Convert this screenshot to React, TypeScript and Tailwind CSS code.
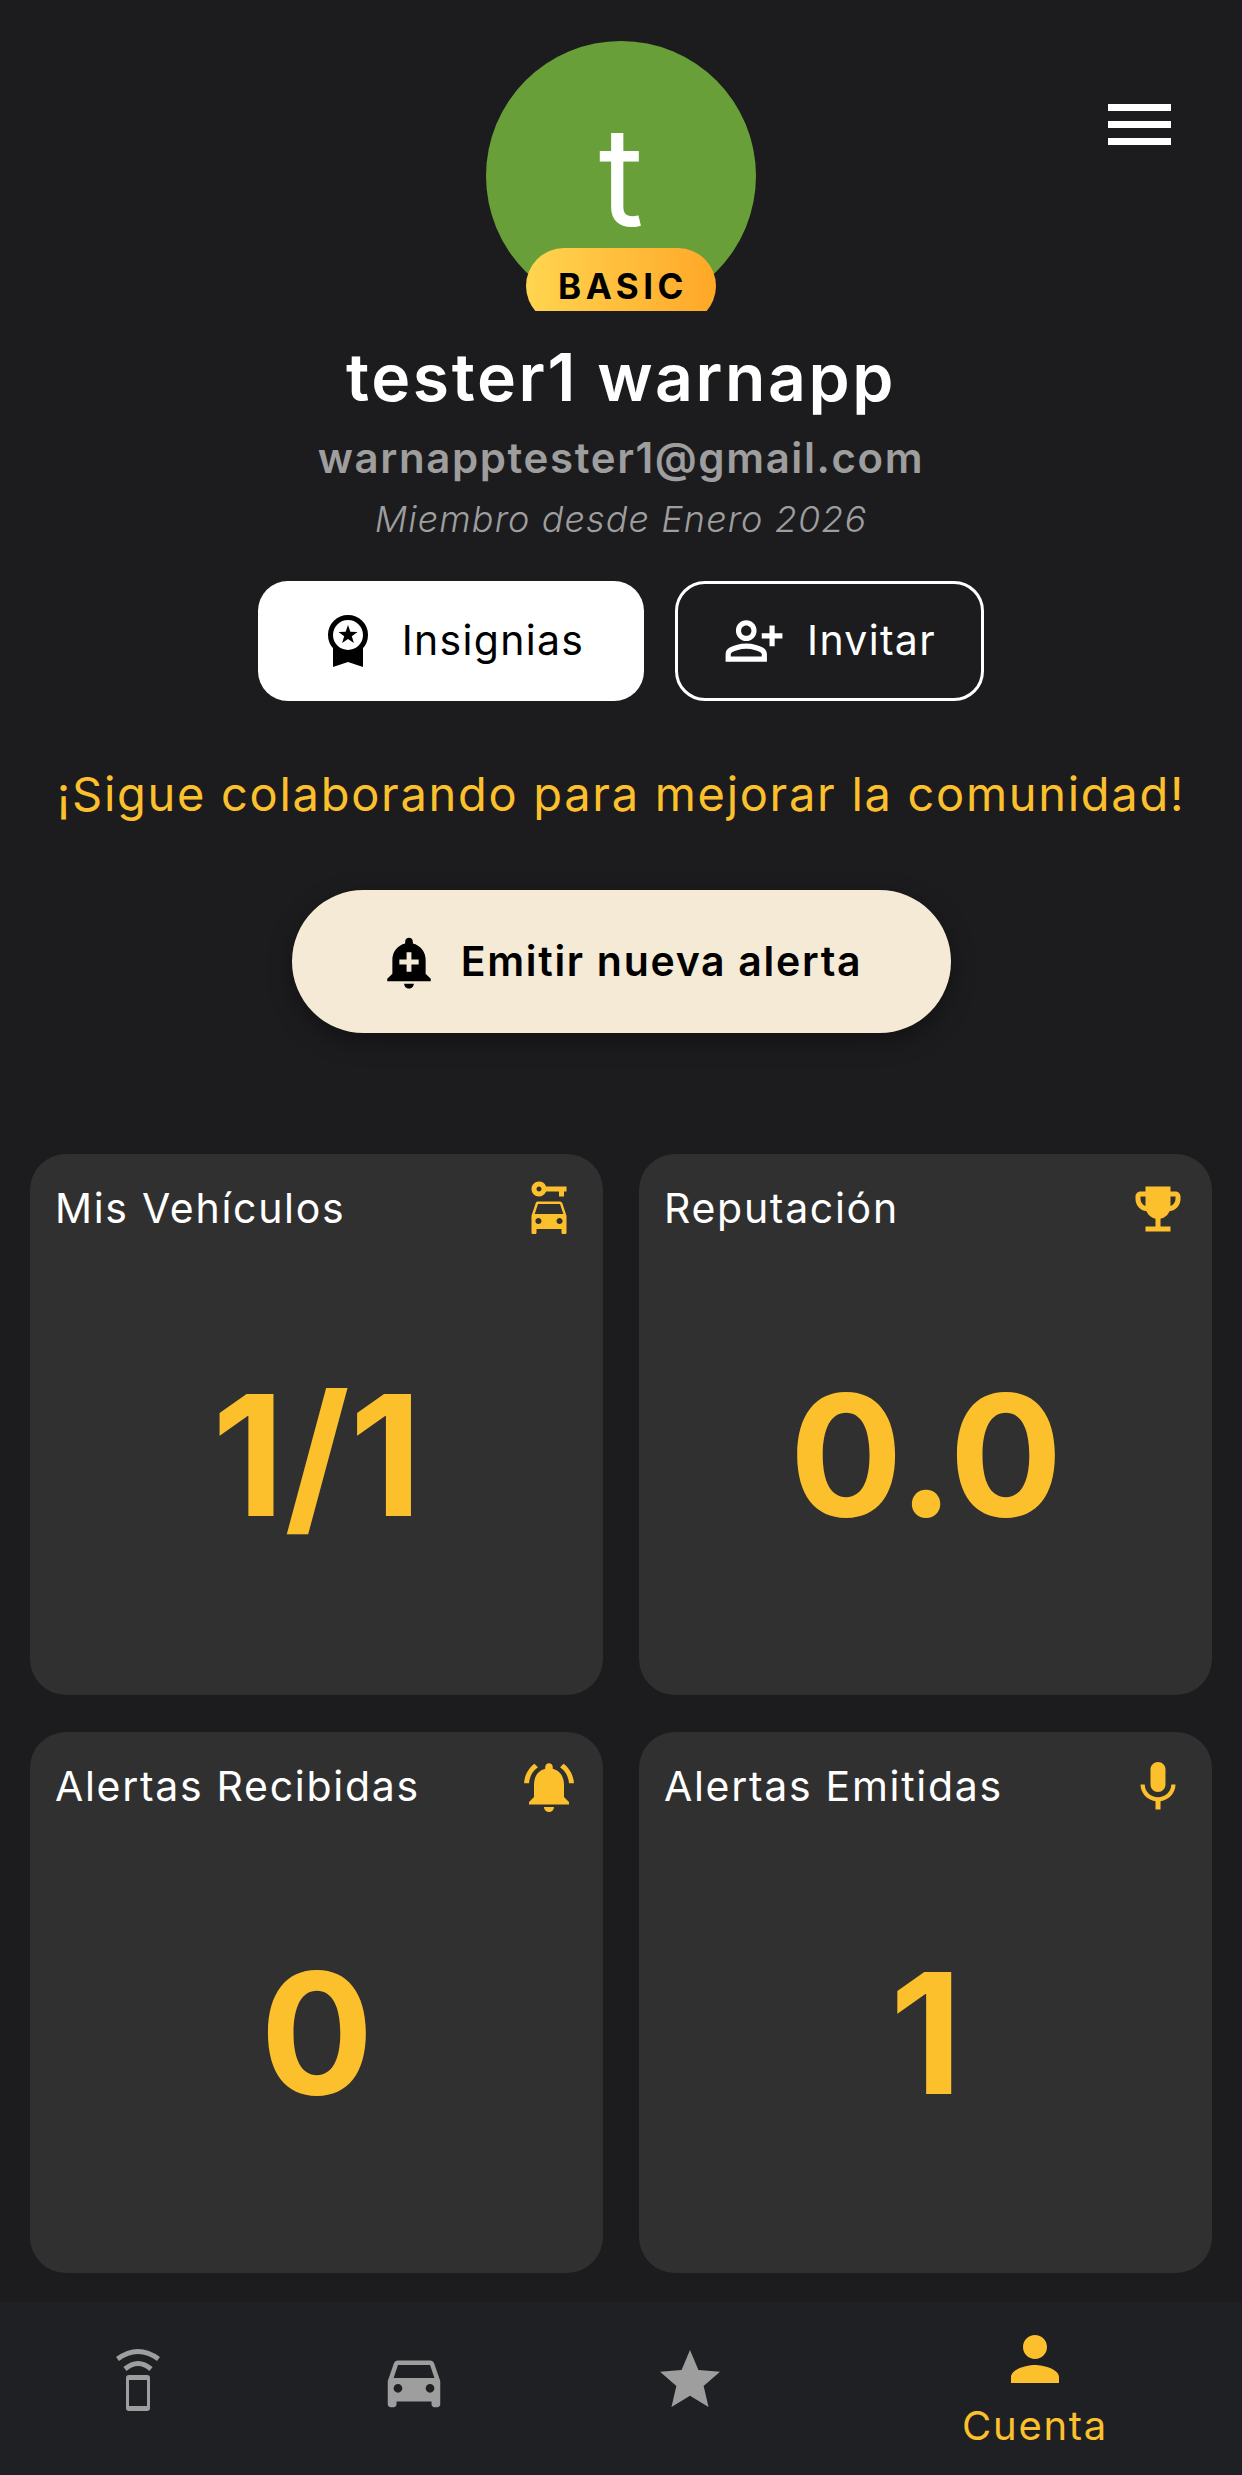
import {
  MdAddAlert,
  MdCarRental,
  MdDirectionsCar,
  MdEmojiEvents,
  MdMic,
  MdNotificationsActive,
  MdOutlinePersonAddAlt,
  MdPerson,
  MdStar,
} from "react-icons/md";

const stats = [
  { title: "Mis Vehículos", value: "1/1", Icon: MdCarRental },
  { title: "Reputación", value: "0.0", Icon: MdEmojiEvents },
  { title: "Alertas Recibidas", value: "0", Icon: MdNotificationsActive },
  { title: "Alertas Emitidas", value: "1", Icon: MdMic },
];

function PhoneSignal() {
  return (
    <svg viewBox="0 0 46 63" className="w-[46px] h-[63px]" fill="none">
      <path d="M2.5 11 Q23 -4 43.5 11" stroke="#9e9e9e" strokeWidth="5" />
      <path d="M10 21 Q23 10 36 21" stroke="#9e9e9e" strokeWidth="5" />
      <path
        fillRule="evenodd"
        fill="#9e9e9e"
        d="M14 27h18a3 3 0 0 1 3 3v30a3 3 0 0 1-3 3H14a3 3 0 0 1-3-3V30a3 3 0 0 1 3-3zM14 32v26h18V32z"
      />
    </svg>
  );
}

function MedalIcon() {
  return (
    <svg viewBox="0 0 40 52" className="w-[40px] h-[52px]">
      <path d="M5 28V52L20 47L35 52V28z" fill="#000" />
      <circle cx="20" cy="20" r="17.5" fill="#fff" stroke="#000" strokeWidth="5" />
      <path
        d="M20 10L22.35 16.76L29.51 16.91L23.8 21.24L25.88 28.09L20 24L14.12 28.09L16.2 21.24L10.49 16.91L17.65 16.76z"
        fill="#000"
      />
    </svg>
  );
}

export default function App() {
  return (
    <div className="w-[1242px] h-[2475px] bg-[#1c1c1e] flex flex-col font-['Inter',sans-serif] overflow-hidden">
      <div className="relative flex-1 flex flex-col items-center pt-[41px]">
        <div className="absolute top-[104px] left-[1108px] w-[63px] flex flex-col gap-[10px]">
          <div className="h-[7px] bg-white" />
          <div className="h-[7px] bg-white" />
          <div className="h-[7px] bg-white" />
        </div>

        <div className="relative w-[270px] h-[270px] overflow-hidden">
          <div className="w-[270px] h-[270px] rounded-full bg-[#689f38] flex items-center justify-center">
            <span className="text-white text-[138px] leading-[268px] font-normal">t</span>
          </div>
          <div className="absolute left-[40px] top-[207px] w-[190px] h-[76px] rounded-full bg-gradient-to-r from-[#ffd54f] to-[#ffa726] flex items-center justify-center pl-[4px]">
            <span className="text-black text-[35px] font-bold tracking-[4.5px] leading-none">BASIC</span>
          </div>
        </div>

        <div className="mt-[28px] text-white text-[66px] leading-[76px] font-semibold tracking-[2.6px]">tester1 warnapp</div>
        <div className="mt-[19px] text-[#9e9e9e] text-[42px] leading-[48px] font-semibold tracking-[1.6px]">warnapptester1@gmail.com</div>
        <div className="mt-[17px] text-[#9e9e9e] text-[36px] leading-[40px] italic font-light tracking-[1.1px]">Miembro desde Enero 2026</div>

        <div className="mt-[42px] flex gap-[31px]">
          <button className="w-[386px] h-[120px] rounded-[30px] bg-white text-black flex items-center justify-center gap-[29px] pl-[5px]">
            <span className="w-[50px] flex justify-center"><MedalIcon /></span>
            <span className="text-[41px] tracking-[1.3px]">Insignias</span>
          </button>
          <button className="w-[309px] h-[120px] rounded-[30px] border-[3px] border-white text-white flex items-center justify-center gap-[22px]">
            <MdOutlinePersonAddAlt className="w-[62px] h-[62px]" />
            <span className="text-[41px] tracking-[1.3px]">Invitar</span>
          </button>
        </div>

        <div className="mt-[67px] text-[#fdc02d] text-[47px] leading-[52px] tracking-[1.7px] whitespace-nowrap">¡Sigue colaborando para mejorar la comunidad!</div>

        <button className="mt-[70px] w-[659px] h-[143px] rounded-full bg-[#f5ead6] text-black flex items-center justify-center gap-[23px] shadow-[0_8px_24px_rgba(0,0,0,0.35)]">
          <MdAddAlert className="w-[58px] h-[58px]" />
          <span className="text-[41px] font-semibold tracking-[1.7px]">Emitir nueva alerta</span>
        </button>

        <div className="mt-[121px] w-full px-[30px] grid grid-cols-2 gap-x-[36px] gap-y-[37px]">
          {stats.map(({ title, value, Icon }) => (
            <div key={title} className="h-[541px] rounded-[36px] bg-[#303030] flex flex-col pl-[25px] pr-[24px] pt-[25px]">
              <div className="flex items-center justify-between h-[60px]">
                <span className="text-white text-[41px] tracking-[1.7px]">{title}</span>
                <Icon className="w-[60px] h-[60px] text-[#fdc02d] shrink-0" />
              </div>
              <div className="flex-1 flex items-center justify-center pb-[25px]">
                <span className="text-[#fdc02d] text-[168px] font-bold leading-none">{value}</span>
              </div>
            </div>
          ))}
        </div>
      </div>

      <div className="h-[173px] bg-[#1f2024] flex">
        <div className="flex-1 flex items-center justify-center pb-[18px]"><PhoneSignal /></div>
        <div className="flex-1 flex items-center justify-center pb-[16px]"><MdDirectionsCar className="w-[70px] h-[70px] text-[#9e9e9e]" /></div>
        <div className="flex-1 flex items-center justify-center pb-[18px]"><MdStar className="w-[72px] h-[72px] text-[#9e9e9e]" /></div>
        <div className="flex-[1.5] flex flex-col items-center justify-center pb-[5px]">
          <MdPerson className="w-[72px] h-[72px] text-[#fdc02d]" />
          <span className="mt-[8px] text-[#fdc02d] text-[40px] leading-[46px] tracking-[1.7px]">Cuenta</span>
        </div>
      </div>
    </div>
  );
}
